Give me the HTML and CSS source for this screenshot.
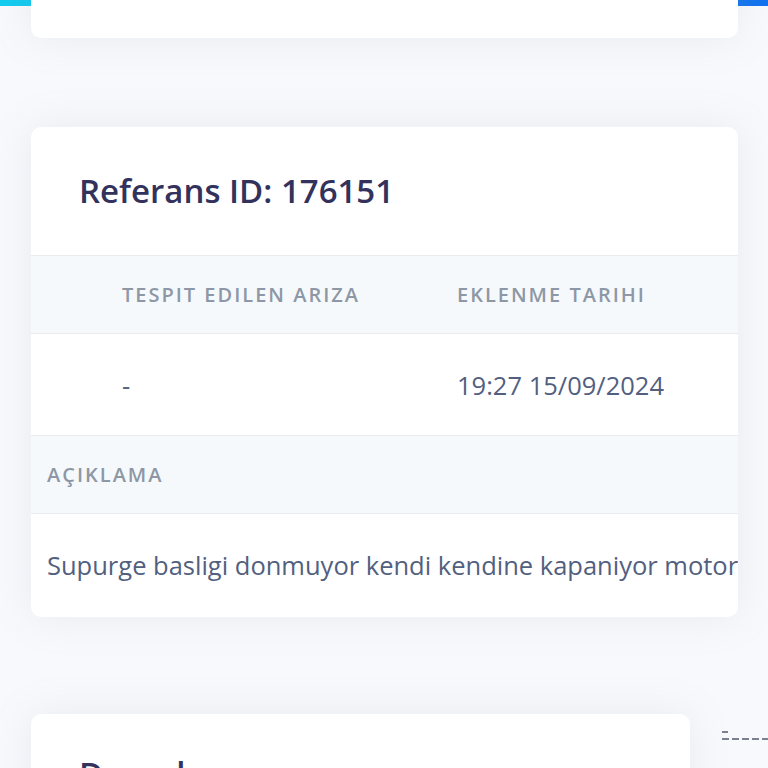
FILE: index.html
```html
<!DOCTYPE html>
<html lang="en">
<head>
<meta charset="utf-8">
<title>Referans</title>
<link rel="stylesheet" href="styles.css">
</head>
<body>
<div class="top-band"></div>
<main class="page">
  <section class="card card-top"></section>

  <section class="card card-ref">
    <header class="card-header">
      <h3 class="title">Referans ID: 176151</h3>
    </header>
    <div class="table">
      <div class="row head two">
        <div class="cell c1">TESPIT EDILEN ARIZA</div>
        <div class="cell c2">EKLENME TARIHI</div>
      </div>
      <div class="row body two">
        <div class="cell c1">-</div>
        <div class="cell c2">19:27 15/09/2024</div>
      </div>
      <div class="row head">
        <div class="cell c0">AÇIKLAMA</div>
      </div>
      <div class="row body last">
        <div class="cell c0">Supurge basligi donmuyor kendi kendine kapaniyor motor</div>
      </div>
    </div>
  </section>

  <div class="bottom-row">
    <section class="card card-files">
      <header class="card-header">
        <h3 class="title">Dosyalar</h3>
      </header>
    </section>
    <div class="side-mark">
      <span class="eq"></span>
      <span class="dash"></span>
    </div>
  </div>
</main>
</body>
</html>
```
FILE: styles.css
```css
html, body {
  margin: 0;
  padding: 0;
}
body {
  background: #f8f9fc;
  font-family: "Open Sans", "Noto Sans", sans-serif;
  width: 768px;
  height: 768px;
  overflow: hidden;
}
.top-band {
  height: 6px;
  background: linear-gradient(87deg, #11cdef 0, #1171ef 100%);
}
.page {
  margin-top: -6px;
  padding: 0 30px 0 31px;
}
.card {
  background: #fff;
  border-radius: 10px;
  box-shadow: 0 0 40px 0 rgba(136, 152, 170, 0.15);
  overflow: hidden;
}
.card-top {
  margin-top: -60px;
  height: 92px;
}
.card-ref {
  margin-top: 89px;
  height: 490px;
}
.card-header {
  height: 128px;
  border-bottom: 1px solid #e9ecef;
  padding: 0 48px;
  display: flex;
  align-items: center;
}
.title {
  margin: 0;
  font-size: 33px;
  font-weight: 600;
  color: #32325d;
  line-height: 1.2;
}
.row {
  display: flex;
  align-items: center;
  border-bottom: 1px solid #e9ecef;
}
.row.two .c1 {
  width: 335px;
  padding-left: 91px;
}
.row.two .c2 {
  padding-left: 0;
}
.c0 {
  padding-left: 16px;
  white-space: nowrap;
}
.row.head {
  background: #f6f9fc;
  height: 77px;
}
.row.head .cell {
  font-size: 20px;
  font-weight: 600;
  letter-spacing: 2px;
  color: #8d97a5;
}
.row.body {
  height: 101px;
}
.row.body .cell {
  font-size: 25.5px;
  color: #525f7f;
}
.row.last {
  border-bottom: 0;
}
.bottom-row {
  margin-top: 97px;
  display: flex;
  align-items: flex-start;
}
.card-files {
  flex: 0 0 659px;
  height: 200px;
}
.card-files .card-header {
  align-items: flex-start;
  padding-top: 40px;
  height: 120px;
}
.side-mark {
  flex: 0 0 46px;
  margin-left: 32px;
  margin-top: 17px;
  display: flex;
  flex-direction: column;
  gap: 5px;
}
.side-mark .eq {
  width: 6px;
  height: 2px;
  background: #7c8190;
}
.side-mark .dash {
  width: 46px;
  height: 2px;
  background: repeating-linear-gradient(90deg, #7c8190 0 7px, transparent 7px 10px);
}
```
